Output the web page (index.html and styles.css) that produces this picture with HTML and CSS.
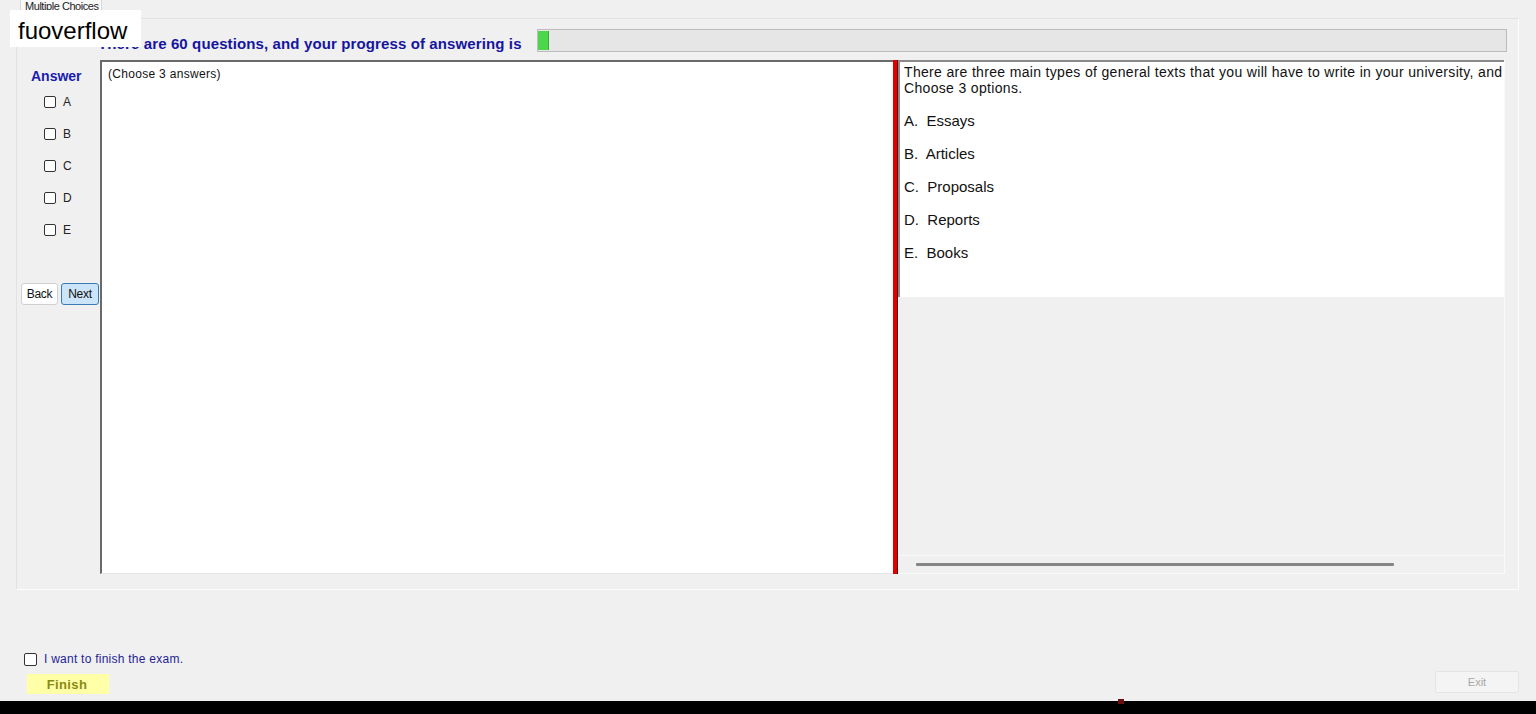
FILE: index.html
```html
<!DOCTYPE html>
<html>
<head>
<meta charset="utf-8">
<title>Multiple Choices</title>
<link rel="stylesheet" href="styles.css">
</head>
<body>
<div class="watermark">fuoverflow</div>
<div class="tabs"><div class="tab">Multiple Choices</div></div>
<div class="panel">
  <div class="header">
    <div class="heading">There are 60 questions, and your progress of answering is</div>
    <div class="progress"><div class="fill" style="width:10px"></div></div>
  </div>
  <div class="main">
    <div class="answers">
      <div class="answer-title">Answer</div>
      <label class="opt"><span class="box"></span>A</label>
      <label class="opt"><span class="box"></span>B</label>
      <label class="opt"><span class="box"></span>C</label>
      <label class="opt"><span class="box"></span>D</label>
      <label class="opt"><span class="box"></span>E</label>
      <div class="nav">
        <button class="btn">Back</button>
        <button class="btn btn-active">Next</button>
      </div>
    </div>
    <div class="textarea">(Choose 3 answers)</div>
    <div class="splitter"></div>
    <div class="question">
      <div class="qtext">
        <div class="qline">There are three main types of general texts that you will have to write in your university, and</div>
        <div class="qline">Choose 3 options.</div>
        <div class="choice">A.&nbsp; Essays</div>
        <div class="choice">B.&nbsp; Articles</div>
        <div class="choice">C.&nbsp; Proposals</div>
        <div class="choice">D.&nbsp; Reports</div>
        <div class="choice">E.&nbsp; Books</div>
      </div>
      <div class="qempty"></div>
      <div class="hscroll"><div class="thumb"></div></div>
    </div>
  </div>
</div>
<div class="footer">
  <label class="finish-check"><span class="box"></span>I want to finish the exam.</label>
  <div class="footer-row">
    <button class="finish">Finish</button>
    <button class="exit" disabled>Exit</button>
  </div>
</div>
<div class="taskbar"><span class="mark"></span></div>
</body>
</html>
```
FILE: styles.css
```css
html, body {
  margin: 0;
  padding: 0;
}
body {
  width: 1536px;
  height: 714px;
  overflow: hidden;
  background: #f0f0f0;
  font-family: "Liberation Sans", Arial, sans-serif;
  position: relative;
}
.watermark {
  position: absolute;
  left: 10px;
  top: 10px;
  width: 131px;
  height: 37px;
  background: #fff;
  font-size: 24px;
  line-height: 42px;
  padding-left: 8px;
  box-sizing: border-box;
  color: #000;
  z-index: 5;
}
.tabs {
  height: 18px;
  padding-left: 20px;
  display: flex;
}
.tab {
  height: 15px;
  width: 82px;
  box-sizing: border-box;
  padding-left: 4px;
  font-size: 11px;
  letter-spacing: -0.45px;
  line-height: 13px;
  color: #222;
  background: #f9f9f9;
  border: 1px solid #d8d8d8;
  border-top: none;
  border-bottom: none;
  white-space: nowrap;
  overflow: hidden;
}
.panel {
  margin: 0 17px 0 16px;
  height: 572px;
  box-sizing: border-box;
  border: 1px solid #e2e2e2;
  border-right-color: #fcfcfc;
  border-bottom-color: #fcfcfc;
  background: #f0f0f0;
}
.header {
  display: flex;
  align-items: flex-end;
  margin-top: 10px;
  height: 23px;
}
.heading {
  margin-left: 81px;
  width: 439px;
  white-space: nowrap;
  font-weight: bold;
  font-size: 15px;
  letter-spacing: 0.12px;
  color: #1515a0;
  line-height: 16px;
  margin-bottom: 0;
}
.progress {
  width: 970px;
  height: 23px;
  box-sizing: border-box;
  border: 1px solid #bcbcbc;
  background: #e6e6e6;
  padding: 1px 0;
}
.fill {
  height: 100%;
  background: #4cd64c;
  border-right: 1px solid #3aa83a;
}
.main {
  display: flex;
  margin-top: 8px;
  height: 514px;
}
.answers {
  width: 83px;
  display: flex;
  flex-direction: column;
}
.answer-title {
  margin: 8px 0 0 14px;
  font-size: 14px;
  font-weight: bold;
  color: #1a1ab0;
  height: 16px;
  line-height: 16px;
}
.opt {
  display: flex;
  align-items: center;
  margin-left: 27px;
  height: 12px;
  margin-top: 20px;
  font-size: 12px;
  color: #222;
}
.answer-title + .opt {
  margin-top: 12px;
}
.box {
  width: 12px;
  height: 12px;
  box-sizing: border-box;
  border: 1px solid #333;
  border-radius: 2px;
  background: #fff;
  margin-right: 7px;
  flex: none;
}
.nav {
  display: flex;
  margin-top: 47px;
  margin-left: 4px;
  gap: 3px;
}
.btn {
  height: 22px;
  box-sizing: border-box;
  padding: 0 2px;
  font-family: "Liberation Sans", Arial, sans-serif;
  font-size: 12px;
  letter-spacing: -0.3px;
  color: #111;
  background: #fff;
  border: 1px solid #d0d0d0;
  border-radius: 3px;
  width: 37px;
}
.btn-active {
  width: 38px;
  background: #cce4f7;
  border-color: #3a7ab8;
}
.textarea {
  width: 793px;
  box-sizing: border-box;
  background: #fff;
  border-top: 2px solid #6a6a6a;
  border-left: 2px solid #6a6a6a;
  border-bottom: 1px solid #e6e6e6;
  padding: 5px 0 0 6px;
  font-size: 12px;
  letter-spacing: 0.3px;
  color: #111;
}
.splitter {
  width: 5px;
  box-sizing: border-box;
  background: #e00000;
  border-right: 1px solid #5a0000;
}
.question {
  width: 607px;
  display: flex;
  flex-direction: column;
  border-right: 1px solid #fafafa;
  box-sizing: border-box;
}
.qtext {
  height: 237px;
  box-sizing: border-box;
  background: #fff;
  border-top: 2px solid #8a8a8a;
  border-left: 2px solid #8a8a8a;
  padding: 2px 0 0 4px;
  overflow: hidden;
  color: #111;
}
.qline {
  font-size: 14px;
  line-height: 16px;
  white-space: nowrap;
  letter-spacing: 0.33px;
}
.choice {
  font-size: 15px;
  line-height: 17px;
  margin-top: 16px;
}
.qline + .choice {
  margin-top: 16px;
}
.qempty {
  flex: 1;
  border-left: 1px solid #f8f8f8;
}
.hscroll {
  height: 17px;
  border-top: 1px solid #fafafa;
  border-bottom: 1px solid #fafafa;
  display: flex;
  align-items: center;
  padding-left: 18px;
}
.thumb {
  width: 478px;
  height: 3px;
  background: #858585;
  border-radius: 1px;
}
.footer {
  height: 111px;
  box-sizing: border-box;
  padding-top: 62px;
}
.finish-check {
  display: flex;
  align-items: center;
  margin-left: 24px;
  height: 14px;
  font-size: 12px;
  letter-spacing: 0.25px;
  color: #1e1e96;
}
.finish-check .box {
  width: 13px;
  height: 13px;
}
.footer-row {
  display: flex;
  justify-content: space-between;
  align-items: flex-end;
  margin-top: 5px;
  padding: 0 17px 0 27px;
}
.finish {
  width: 82px;
  height: 20px;
  border: none;
  background: #ffffa8;
  font-family: "Liberation Sans", Arial, sans-serif;
  font-weight: bold;
  font-size: 13px;
  letter-spacing: 0.4px;
  color: #8a8a10;
  padding: 0 2px 0 0;
  margin-bottom: 1px;
}
.exit {
  width: 84px;
  height: 22px;
  margin-bottom: 2px;
  border: 1px solid #e4e4e4;
  background: #f4f4f4;
  color: #a8a8a8;
  font-family: "Liberation Sans", Arial, sans-serif;
  font-size: 11px;
  border-radius: 2px;
  padding: 0;
}
.taskbar {
  height: 13px;
  background: #000;
  position: relative;
}
.mark {
  position: absolute;
  left: 1118px;
  top: -2px;
  width: 6px;
  height: 5px;
  background: #6a1010;
}
```
